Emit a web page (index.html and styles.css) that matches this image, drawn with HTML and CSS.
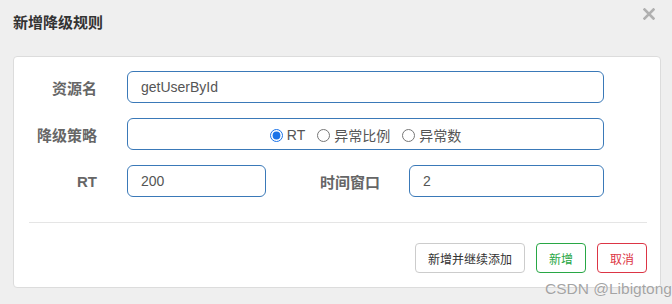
FILE: index.html
```html
<!DOCTYPE html>
<html>
<head>
<meta charset="utf-8">
<link rel="stylesheet" href="styles.css">
</head>
<body>
<div class="modal">
  <div class="header">
    <h4 class="title">新增降级规则</h4>
    <svg class="close" width="12" height="12" viewBox="0 0 12 12"><path d="M1.5 1.5L10.5 10.5M10.5 1.5L1.5 10.5" stroke="#b0b0b0" stroke-width="2.6" stroke-linecap="square"/></svg>
  </div>
  <div class="panel">
    <div class="row">
      <label class="label">资源名</label>
      <div class="input grow">getUserById</div>
    </div>
    <div class="row">
      <label class="label">降级策略</label>
      <div class="input grow radios">
        <label class="radio"><input type="radio" name="s" checked>RT</label>
        <label class="radio"><input type="radio" name="s">异常比例</label>
        <label class="radio"><input type="radio" name="s">异常数</label>
      </div>
    </div>
    <div class="row">
      <label class="label">RT</label>
      <div class="input small">200</div>
      <label class="label label2">时间窗口</label>
      <div class="input grow">2</div>
    </div>
    <div class="sep"></div>
    <div class="footer">
      <button class="btn">新增并继续添加</button>
      <button class="btn btn-green">新增</button>
      <button class="btn btn-red">取消</button>
    </div>
  </div>
  <div class="watermark">CSDN @Libigtong</div>
</div>
</body>
</html>
```
FILE: styles.css
```css
html, body {
  margin: 0;
  padding: 0;
  background: #efefef;
  font-family: "Liberation Sans", "Noto Sans CJK SC", sans-serif;
}
.modal {
  position: relative;
  width: 672px;
  height: 304px;
  box-sizing: border-box;
  padding: 0 11px 0 13px;
}
.header {
  position: relative;
  height: 56px;
  box-sizing: border-box;
  padding-top: 14px;
}
.title {
  margin: 0;
  font-size: 15px;
  line-height: 18px;
  font-weight: bold;
  color: #333;
}
.close {
  position: absolute;
  right: 6px;
  top: 8px;
}
.panel {
  background: #fff;
  border: 1px solid #dcdcdc;
  border-radius: 4px;
  height: 232px;
  box-sizing: border-box;
  padding: 14px 56px 0 14px;
}
.row {
  display: flex;
  align-items: center;
  height: 32px;
  margin-bottom: 15px;
}
.label {
  width: 69px;
  margin-right: 30px;
  text-align: right;
  font-size: 15px;
  font-weight: bold;
  color: #666;
}
.label2 {
  width: 114px;
  margin-right: 29px;
}
.input {
  height: 32px;
  box-sizing: border-box;
  border: 1px solid #3a79b8;
  border-radius: 6px;
  padding: 0 13px;
  display: flex;
  align-items: center;
  font-size: 14px;
  color: #555;
}
.grow { flex: 1; }
.small { width: 139px; }
.radios {
  justify-content: center;
  padding: 0;
  padding-top: 2px;
}
.radio {
  display: flex;
  align-items: center;
  font-size: 14px;
  color: #555;
  margin-right: 12px;
}
.radio:last-child { margin-right: 0; }
.radio input {
  margin: 0 4px 0 0;
  width: 13px;
  height: 13px;
  accent-color: #1a73e8;
}
.sep {
  height: 1px;
  background: #e5e5e5;
  margin: 25px 0 20px 1px;
  width: 618px;
}
.footer {
  display: flex;
  justify-content: flex-end;
  gap: 11px;
  margin-right: -43px;
}
.btn {
  height: 30px;
  box-sizing: border-box;
  padding: 0 12px;
  font-family: "Liberation Sans", "Noto Sans CJK SC", sans-serif;
  font-size: 12px;
  background: #fff;
  border: 1px solid #ccc;
  border-radius: 4px;
  color: #333;
}
.btn-green {
  border-color: #28a745;
  color: #28a745;
}
.btn-red {
  border-color: #dc3545;
  color: #dc3545;
}
.watermark {
  position: absolute;
  left: 545px;
  top: 280px;
  font-size: 15.5px;
  color: #a4a4a4;
  text-shadow: 0 0 1px #fff;
}
```
